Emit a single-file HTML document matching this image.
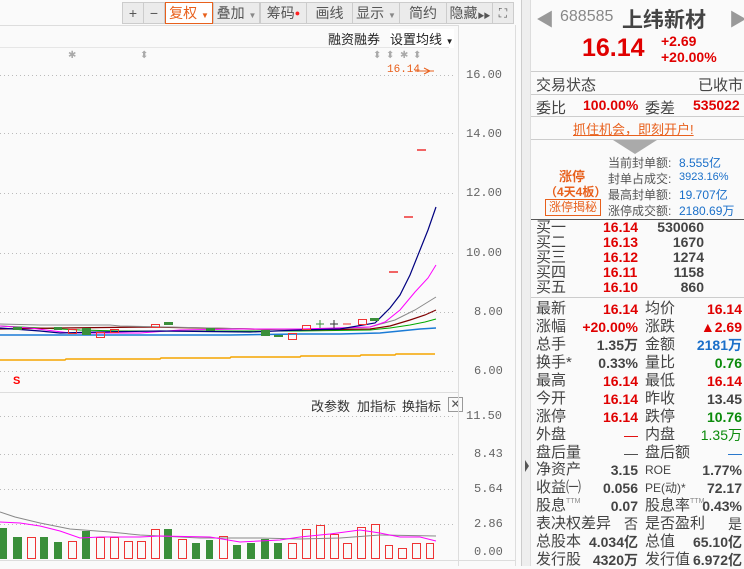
<!DOCTYPE html>
<html><head><meta charset="utf-8">
<style>
*{margin:0;padding:0;box-sizing:border-box}
body{width:744px;height:566px;overflow:hidden;background:#fafafa;font-family:"Liberation Sans","Noto Sans CJK SC",sans-serif;position:relative;color:#333}
.a{position:absolute;white-space:nowrap}
.tb{position:absolute;top:2px;height:22px;border:1px solid #ccc;background:#ebebeb;font-size:14px;color:#555;text-align:center;line-height:20px;white-space:nowrap;overflow:hidden}
.ax{position:absolute;left:466px;font-family:"Liberation Mono",monospace;font-size:12px;color:#666}
.r{position:absolute;font-size:14px;white-space:nowrap}
.red{color:#e00000;font-weight:bold}
.grn{color:#0a8a0a;font-weight:bold}
.lab{color:#444}
.row{position:absolute;left:531px;width:213px;height:18px;font-size:14px;line-height:18px;white-space:nowrap}
.row .l1{position:absolute;left:5px;color:#444;font-size:15px}
.row .v1{position:absolute;right:106px;font-weight:bold;color:#444}
.row .l2{position:absolute;left:114px;color:#444;font-size:15px}
.row .v2{position:absolute;right:2px;font-weight:bold;color:#444}
.row .red{color:#e00000}
.row .grn{color:#0a8a0a}
.row .blu{color:#1a6fc9}
sup{font-size:7px;line-height:0;vertical-align:7px;color:#888}
</style></head><body>
<div class="tb" style="left:122px;width:22px">+</div>
<div class="tb" style="left:143px;width:22px">−</div>
<div class="tb" style="left:165px;width:48px;border:1px solid #e8601c;background:#fff;color:#e8601c">复权 <span style="font-size:8px">▼</span></div>
<div class="tb" style="left:213px;width:47px">叠加 <span style="font-size:8px;color:#888">▼</span></div>
<div class="tb" style="left:260px;width:47px">筹码<span style="color:#f22;font-size:9px;vertical-align:top">●</span></div>
<div class="tb" style="left:306px;width:47px">画线</div>
<div class="tb" style="left:352px;width:48px">显示 <span style="font-size:8px;color:#888">▼</span></div>
<div class="tb" style="left:399px;width:48px">简约</div>
<div class="tb" style="left:446px;width:47px">隐藏<span style="font-size:7px;letter-spacing:-1px">▶▶</span></div>
<div class="tb" style="left:492px;width:22px;font-size:12px">⛶</div>
<div class="a" style="left:0;top:25px;width:458px;height:1px;background:#ddd"></div>
<div class="a" style="left:328px;top:29px;font-size:13px;color:#222">融资融券</div>
<div class="a" style="left:390px;top:29px;font-size:13px;color:#222;background:#fff">设置均线 <span style="font-size:8px">▼</span></div>
<div class="a" style="left:0;top:47px;width:449px;height:1px;background:#e6e6e6"></div>
<div class="ax" style="top:68px">16.00</div>
<div class="ax" style="top:127px">14.00</div>
<div class="ax" style="top:186px">12.00</div>
<div class="ax" style="top:246px">10.00</div>
<div class="ax" style="top:305px;left:474px">8.00</div>
<div class="ax" style="left:474px;top:364px">6.00</div>
<div class="ax" style="top:409px">11.50</div>
<div class="ax" style="left:474px;top:447px">8.43</div>
<div class="ax" style="left:474px;top:482px">5.64</div>
<div class="ax" style="left:474px;top:517px">2.86</div>
<div class="ax" style="left:474px;top:545px">0.00</div>
<div class="a" style="left:387px;top:64px;font-family:'Liberation Mono',monospace;font-size:11px;color:#e8601c">16.14</div>
<div class="a" style="left:311px;top:396px;font-size:13px;color:#333">改参数</div>
<div class="a" style="left:357px;top:396px;font-size:13px;color:#333">加指标</div>
<div class="a" style="left:402px;top:396px;font-size:13px;color:#333">换指标</div>
<div class="a" style="left:448px;top:397px;width:15px;height:15px;border:1px solid #999;font-size:12px;line-height:13px;text-align:center;color:#555">✕</div>
<div class="a" style="left:13px;top:375px;font-size:11px;font-weight:bold;color:#f00">S</div>
<svg class="a" style="left:0;top:0" width="530" height="566">
<g stroke="#bbb" stroke-dasharray="1,3" stroke-width="1">
<line x1="0" y1="75.5" x2="455" y2="75.5"/><line x1="0" y1="133.5" x2="455" y2="133.5"/><line x1="0" y1="193.5" x2="455" y2="193.5"/><line x1="0" y1="253.5" x2="455" y2="253.5"/><line x1="0" y1="312.5" x2="455" y2="312.5"/><line x1="0" y1="371.5" x2="455" y2="371.5"/>
<line x1="0" y1="416.5" x2="455" y2="416.5"/><line x1="0" y1="454.5" x2="455" y2="454.5"/><line x1="0" y1="489.5" x2="455" y2="489.5"/><line x1="0" y1="524.5" x2="455" y2="524.5"/>
</g>
<line x1="458.5" y1="25" x2="458.5" y2="566" stroke="#ddd"/>
<line x1="515.5" y1="25" x2="515.5" y2="566" stroke="#ddd"/>
<line x1="0" y1="392.5" x2="458" y2="392.5" stroke="#ddd"/>
<line x1="0" y1="560.5" x2="515" y2="560.5" stroke="#ddd"/>
<rect x="521" y="0" width="9" height="566" fill="#eee"/>
<line x1="521.5" y1="0" x2="521.5" y2="566" stroke="#ccc"/>
<path d="M525 460 L529 466 L525 472Z" fill="#555"/>
<g fill="#aaa" font-size="10"><text x="68" y="58">✱</text><text x="140" y="58">⬍</text><text x="373" y="58">⬍</text><text x="386" y="58">⬍</text><text x="400" y="58">✱</text><text x="413" y="58">⬍</text></g>
<path d="M415 71 H434 M424 68 L430 71 L424 74" stroke="#e8601c" fill="none"/>
<g stroke="#e33" stroke-width="1.5"><line x1="417" y1="150" x2="426" y2="150"/><line x1="404" y1="217" x2="413" y2="217"/><line x1="389" y1="272" x2="398" y2="272"/></g>
<path d="M0 335 H230 L300 334 H340 L380 333 L400 331 L420 329 L436 328" stroke="#1a7bd6" fill="none" stroke-width="1.5"/>
<path d="M0 360 H65 L66 359 H160 L161 358 H230 L231 357 H300 L301 356 H360 L361 355 H395 L396 354 H435" stroke="#f5a400" fill="none" stroke-width="1.5"/>
<path d="M0 326 L40 328 L80 330 L120 331 L200 331 L300 331 L370 330 L390 328 L410 325 L425 322 L436 319" stroke="#0a0" fill="none"/>
<path d="M0 329 L60 328 L150 327 L250 329 L300 330 L370 329 L390 326 L410 320 L425 315 L436 310" stroke="#800000" fill="none" stroke-width="1.2"/>
<path d="M0 324 L40 325 L110 325 L120 326 L300 330 L370 327 L395 320 L415 310 L436 297" stroke="#888" fill="none"/>
<path d="M0 326 L30 328 L70 333 L140 333 L180 330 L240 329 L300 329 L370 327 L385 322 L400 310 L415 292 L428 278 L436 265" stroke="#f0f" fill="none"/>
<path d="M0 328 L40 331 L60 333 L100 332 L160 331 L250 332 L300 330 L340 329 L375 323 L390 308 L400 295 L410 275 L420 250 L428 230 L436 207" stroke="#000080" fill="none" stroke-width="1.2"/>
<g fill="#3a8f3a"><rect x="13" y="327" width="9" height="3"/><rect x="54" y="327" width="8" height="3"/><rect x="82" y="328" width="9" height="7"/><rect x="164" y="322" width="9" height="3"/><rect x="206" y="328" width="9" height="3"/><rect x="261" y="330" width="9" height="6"/><rect x="274" y="335" width="9" height="2"/><rect x="370" y="318" width="9" height="3"/></g>
<g fill="none" stroke="#e33"><rect x="68.5" y="329.5" width="8" height="4"/><rect x="96.5" y="332.5" width="8" height="5"/><rect x="110.5" y="329.5" width="8" height="3"/><rect x="151.5" y="324.5" width="8" height="3"/><rect x="288.5" y="333.5" width="8" height="6"/><rect x="302.5" y="325.5" width="8" height="4"/><rect x="358.5" y="319.5" width="8" height="5"/></g>
<g stroke="#3a8f3a"><line x1="316" y1="324" x2="324" y2="324"/><line x1="320" y1="320" x2="320" y2="328"/></g>
<g stroke="#333"><line x1="330" y1="324" x2="338" y2="324"/><line x1="334" y1="320" x2="334" y2="328"/></g>
<g stroke="#e33"><line x1="343" y1="324" x2="351" y2="324"/></g>
<g fill="#3a8f3a">
<rect x="0" y="528" width="7" height="31"/><rect x="13" y="537" width="9" height="22"/><rect x="40" y="537" width="8" height="22"/><rect x="54" y="542" width="8" height="17"/><rect x="82" y="531" width="8" height="28"/><rect x="164" y="529" width="8" height="30"/><rect x="192" y="543" width="8" height="16"/><rect x="206" y="540" width="7" height="19"/><rect x="233" y="545" width="8" height="14"/><rect x="247" y="543" width="8" height="16"/><rect x="261" y="539" width="8" height="20"/><rect x="274" y="543" width="8" height="16"/>
</g>
<g fill="none" stroke="#e33">
<rect x="27.5" y="537.5" width="8" height="21"/><rect x="68.5" y="541.5" width="8" height="17"/><rect x="96.5" y="537.5" width="8" height="21"/><rect x="110.5" y="537.5" width="8" height="21"/><rect x="124.5" y="541.5" width="8" height="17"/><rect x="137.5" y="541.5" width="8" height="17"/><rect x="151.5" y="529.5" width="8" height="29"/><rect x="178.5" y="539.5" width="8" height="19"/><rect x="219.5" y="536.5" width="8" height="22"/><rect x="288.5" y="543.5" width="8" height="15"/><rect x="302.5" y="529.5" width="8" height="29"/><rect x="316.5" y="525.5" width="8" height="33"/><rect x="330.5" y="534.5" width="8" height="24"/><rect x="343.5" y="543.5" width="8" height="15"/><rect x="357.5" y="527.5" width="8" height="31"/><rect x="371.5" y="524.5" width="8" height="34"/><rect x="385.5" y="545.5" width="7" height="13"/><rect x="398.5" y="548.5" width="8" height="10"/><rect x="412.5" y="543.5" width="8" height="15"/><rect x="426.5" y="543.5" width="7" height="15"/>
</g>
<path d="M0 512 L15 517 L40 523 L70 529 L110 532 L140 535 L200 538 L260 538 L300 539 L340 538 L380 535 L436 536" stroke="#888" fill="none"/>
<path d="M0 522 L20 523 L40 526 L60 531 L80 538 L100 537 L140 537 L160 536 L210 537 L240 542 L280 540 L300 537 L330 534 L360 530 L380 533 L400 537 L420 537 L436 541" stroke="#f0f" fill="none"/>
</svg>
<div class="a" style="left:530px;top:0;width:1px;height:566px;background:#ddd"></div>
<div class="a" style="left:536px;top:6px;font-size:18px;color:#999">◀</div>
<div class="a" style="left:729px;top:6px;font-size:18px;color:#999">▶</div>
<div class="a" style="left:560px;top:8px;font-size:16px;color:#888">688585</div>
<div class="a" style="left:622px;top:4px;font-size:21px;font-weight:bold;color:#444">上纬新材</div>
<div class="a" style="left:582px;top:34px;font-size:25px;font-weight:bold;color:#e00000">16.14</div>
<div class="a" style="left:661px;top:33px;font-size:14px;font-weight:bold;color:#e00000">+2.69</div>
<div class="a" style="left:661px;top:49px;font-size:14px;font-weight:bold;color:#e00000">+20.00%</div>
<div class="a" style="left:531px;top:71px;width:213px;height:1px;background:#ccc"></div>
<div class="r lab" style="left:536px;top:74px;font-size:15px">交易状态</div>
<div class="r lab" style="left:698px;top:74px;font-size:15px">已收市</div>
<div class="a" style="left:531px;top:94px;width:213px;height:1px;background:#ccc"></div>
<div class="r lab" style="left:536px;top:97px;font-size:15px">委比</div>
<div class="r red" style="left:583px;top:97px">100.00%</div>
<div class="r lab" style="left:645px;top:97px;font-size:15px">委差</div>
<div class="r red" style="left:693px;top:97px">535022</div>
<div class="a" style="left:531px;top:116px;width:213px;height:1px;background:#ccc"></div>
<div class="r" style="left:573px;top:119px;font-size:13px;color:#e8601c;text-decoration:underline">抓住机会，即刻开户!</div>
<div class="a" style="left:531px;top:139px;width:213px;height:1px;background:#ccc"></div>
<div class="a" style="left:613px;top:140px;width:0;height:0;border-left:22px solid transparent;border-right:22px solid transparent;border-top:14px solid #aaa"></div>
<div class="r" style="left:559px;top:166px;font-size:13px;font-weight:bold;color:#e8601c">涨停</div>
<div class="r" style="left:545px;top:183px;font-size:12px;font-weight:bold;color:#e8601c">（4天4板）</div>
<div class="a" style="left:545px;top:199px;width:56px;height:17px;border:1px solid #e8601c;font-size:12px;color:#e8601c;text-align:center;line-height:15px">涨停揭秘</div>
<div class="r" style="left:608px;top:154px;font-size:12px;color:#555">当前封单额:</div><div class="r" style="left:679px;top:154px;font-size:12px;color:#1a6fc9">8.555亿</div>
<div class="r" style="left:608px;top:170px;font-size:12px;color:#555">封单占成交:</div><div class="r" style="left:679px;top:171px;font-size:11px;color:#1a6fc9">3923.16%</div>
<div class="r" style="left:608px;top:186px;font-size:12px;color:#555">最高封单额:</div><div class="r" style="left:679px;top:186px;font-size:12px;color:#1a6fc9">19.707亿</div>
<div class="r" style="left:608px;top:202px;font-size:12px;color:#555">涨停成交额:</div><div class="r" style="left:679px;top:202px;font-size:12px;color:#1a6fc9">2180.69万</div>
<div class="a" style="left:531px;top:219px;width:213px;height:1px;background:#555"></div>
<div class="r lab" style="left:536px;top:220px;line-height:15px;font-size:15px">买一<br>买二<br>买三<br>买四<br>买五</div>
<div class="r red" style="left:603px;top:220px;line-height:15px">16.14<br>16.13<br>16.12<br>16.11<br>16.10</div>
<div class="r" style="left:640px;top:220px;width:64px;text-align:right;line-height:15px;font-weight:bold;color:#444">530060<br>1670<br>1274<br>1158<br>860</div>
<div class="a" style="left:531px;top:297px;width:213px;height:1px;background:#ccc"></div>

<div class="row" style="top:300px"><span class="l1">最新</span><span class="v1 red">16.14</span><span class="l2">均价</span><span class="v2 red">16.14</span></div>
<div class="row" style="top:318px"><span class="l1">涨幅</span><span class="v1 red">+20.00%</span><span class="l2">涨跌</span><span class="v2 red">▲2.69</span></div>
<div class="row" style="top:336px"><span class="l1">总手</span><span class="v1">1.35万</span><span class="l2">金额</span><span class="v2 blu">2181万</span></div>
<div class="row" style="top:354px"><span class="l1">换手*</span><span class="v1">0.33%</span><span class="l2">量比</span><span class="v2 grn">0.76</span></div>
<div class="row" style="top:372px"><span class="l1">最高</span><span class="v1 red">16.14</span><span class="l2">最低</span><span class="v2 red">16.14</span></div>
<div class="row" style="top:390px"><span class="l1">今开</span><span class="v1 red">16.14</span><span class="l2">昨收</span><span class="v2">13.45</span></div>
<div class="row" style="top:408px"><span class="l1">涨停</span><span class="v1 red">16.14</span><span class="l2">跌停</span><span class="v2 grn">10.76</span></div>
<div class="row" style="top:426px"><span class="l1">外盘</span><span class="v1 red" style="font-weight:normal">—</span><span class="l2">内盘</span><span class="v2 grn" style="font-weight:normal">1.35万</span></div>
<div class="row" style="top:444px"><span class="l1">盘后量</span><span class="v1" style="font-weight:normal">—</span><span class="l2">盘后额</span><span class="v2 blu" style="font-weight:normal">—</span></div>
<div class="row" style="top:461px"><span class="l1">净资产</span><span class="v1">3.15</span><span class="l2" style="font-size:12px">ROE</span><span class="v2">1.77%</span></div>
<div class="row" style="top:479px"><span class="l1">收益㈠</span><span class="v1">0.056</span><span class="l2" style="font-size:12px">PE(动)*</span><span class="v2">72.17</span></div>
<div class="row" style="top:497px"><span class="l1">股息<sup>TTM</sup></span><span class="v1">0.07</span><span class="l2">股息率<sup>TTM</sup></span><span class="v2">0.43%</span></div>
<div class="row" style="top:515px"><span class="l1">表决权差异</span><span class="v1" style="font-weight:normal">否</span><span class="l2">是否盈利</span><span class="v2" style="font-weight:normal">是</span></div>
<div class="row" style="top:533px"><span class="l1">总股本</span><span class="v1">4.034亿</span><span class="l2">总值</span><span class="v2">65.10亿</span></div>
<div class="row" style="top:551px"><span class="l1">发行股</span><span class="v1">4320万</span><span class="l2">发行值</span><span class="v2">6.972亿</span></div>
</body></html>
